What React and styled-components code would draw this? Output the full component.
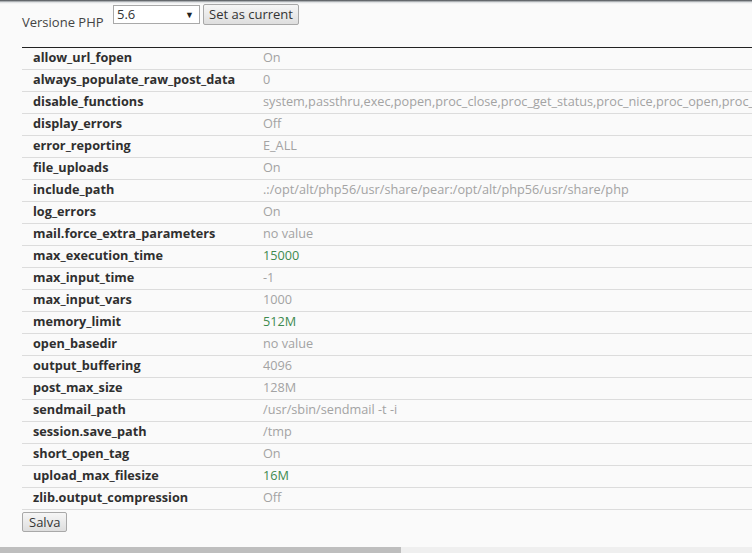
import React from 'react';
import styled, { createGlobalStyle } from 'styled-components';

const GlobalStyle = createGlobalStyle`
  html, body {
    margin: 0;
    padding: 0;
    background: #fafafa;
    overflow: hidden;
  }
  body {
    font-family: "Open Sans", "Liberation Sans", sans-serif;
    font-size: 13px;
    color: #333;
  }
`;

const Page = styled.div`
  height: 100vh;
  display: flex;
  flex-direction: column;
  overflow: hidden;
`;

const TopEdge = styled.div`
  height: 4px;
  flex-shrink: 0;
  background: linear-gradient(to bottom, #3f4347 0, #9a9ea2 30%, #e6e8ea 65%, #fafafa 100%);
`;

const VersionBar = styled.div`
  display: flex;
  align-items: flex-start;
  padding: 0 0 0 22px;
  height: 43px;
  box-sizing: border-box;
`;

const VersionLabel = styled.span`
  margin-top: 9px;
  width: 91px;
  color: #444;
`;

const Select = styled.div`
  margin-top: 1px;
  width: 87px;
  height: 19px;
  box-sizing: border-box;
  border: 1px solid #a9a9a9;
  background: #fff;
  display: flex;
  align-items: center;
  justify-content: space-between;
  padding: 0 5px 0 3px;
  color: #333;
  font-size: 13px;
  line-height: 1;
`;

const Arrow = styled.span`
  font-size: 9px;
  color: #222;
`;

const Button = styled.button`
  font-family: "Open Sans", "Liberation Sans", sans-serif;
  font-size: 13px;
  color: #333;
  height: ${p => p.$h || 21}px;
  padding: 0 ${p => p.$px || 5}px;
  border: 1px solid #a8a8a8;
  border-radius: 2px;
  background: linear-gradient(to bottom, #f6f6f6, #dedede);
  line-height: 1;
  cursor: pointer;
`;

const SetButton = styled(Button)`
  margin-left: 3px;
`;

const Table = styled.div`
  margin-left: 22px;
  border-top: 1px solid #222;
  width: 900px;
`;

const Row = styled.div`
  display: flex;
  box-sizing: border-box;
  height: 22px;
  padding-bottom: 4px;
  align-items: center;
  border-bottom: 1px solid #dcdcdc;
  white-space: nowrap;
  font-size: 12.7px;
`;

const Key = styled.div`
  width: 230px;
  padding-left: 11px;
  font-weight: 700;
  color: #2f2f2f;
  flex-shrink: 0;
`;

const Value = styled.div`
  color: ${p => (p.$changed ? '#3d8a4f' : '#a3a3a3')};
`;

const Footer = styled.div`
  padding: 2px 0 0 22px;
`;

const Scrollbar = styled.div`
  margin-top: auto;
  height: 6px;
  flex-shrink: 0;
  background: #efefef;
  display: flex;
`;

const Thumb = styled.div`
  width: 401px;
  background: #bebebe;
`;

const settings = [
  ['allow_url_fopen', 'On'],
  ['always_populate_raw_post_data', '0'],
  ['disable_functions', 'system,passthru,exec,popen,proc_close,proc_get_status,proc_nice,proc_open,proc_terminate,shell_exec'],
  ['display_errors', 'Off'],
  ['error_reporting', 'E_ALL'],
  ['file_uploads', 'On'],
  ['include_path', '.:/opt/alt/php56/usr/share/pear:/opt/alt/php56/usr/share/php'],
  ['log_errors', 'On'],
  ['mail.force_extra_parameters', 'no value'],
  ['max_execution_time', '15000', true],
  ['max_input_time', '-1'],
  ['max_input_vars', '1000'],
  ['memory_limit', '512M', true],
  ['open_basedir', 'no value'],
  ['output_buffering', '4096'],
  ['post_max_size', '128M'],
  ['sendmail_path', '/usr/sbin/sendmail -t -i'],
  ['session.save_path', '/tmp'],
  ['short_open_tag', 'On'],
  ['upload_max_filesize', '16M', true],
  ['zlib.output_compression', 'Off'],
];

export default function App() {
  return (
    <Page>
      <GlobalStyle />
      <TopEdge />
      <VersionBar>
        <VersionLabel>Versione PHP</VersionLabel>
        <Select>
          <span>5.6</span>
          <Arrow>▼</Arrow>
        </Select>
        <SetButton>Set as current</SetButton>
      </VersionBar>
      <Table>
        {settings.map(([key, value, changed]) => (
          <Row key={key}>
            <Key>{key}</Key>
            <Value $changed={changed}>{value}</Value>
          </Row>
        ))}
      </Table>
      <Footer>
        <Button $h={20} $px={6}>Salva</Button>
      </Footer>
      <Scrollbar>
        <Thumb />
      </Scrollbar>
    </Page>
  );
}
